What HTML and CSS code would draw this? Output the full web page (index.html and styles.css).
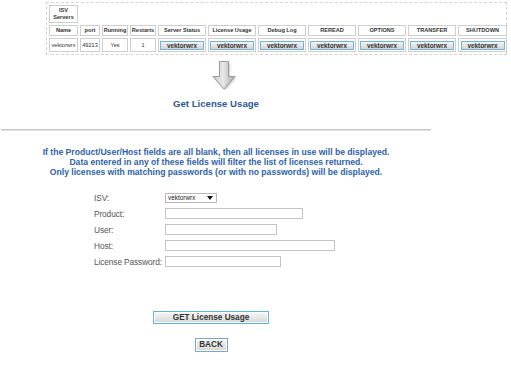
FILE: index.html
```html
<!DOCTYPE html>
<html>
<head>
<meta charset="utf-8">
<title>Get License Usage</title>
<link rel="stylesheet" href="styles.css">
</head>
<body>
<div class="servers">
  <table class="isv">
    <colgroup>
      <col class="c-name"><col class="c-port"><col class="c-run"><col class="c-rest">
      <col class="c-btn"><col class="c-btn"><col class="c-btn"><col class="c-btn"><col class="c-btn"><col class="c-btn"><col class="c-last">
    </colgroup>
    <tr class="r-top"><th class="cell">ISV<br>Servers</th><td colspan="10" class="blank"></td></tr>
    <tr class="r-head">
      <th class="cell">Name</th><th class="cell">port</th><th class="cell">Running</th><th class="cell">Restarts</th>
      <th class="cell">Server Status</th><th class="cell">License Usage</th><th class="cell">Debug Log</th>
      <th class="cell">REREAD</th><th class="cell">OPTIONS</th><th class="cell">TRANSFER</th><th class="cell">SHUTDOWN</th>
    </tr>
    <tr class="r-data">
      <td class="cell">vektorwrx</td><td class="cell">49213</td><td class="cell">Yes</td><td class="cell">1</td>
      <td class="cell"><button class="sbtn">vektorwrx</button></td>
      <td class="cell"><button class="sbtn">vektorwrx</button></td>
      <td class="cell"><button class="sbtn">vektorwrx</button></td>
      <td class="cell"><button class="sbtn">vektorwrx</button></td>
      <td class="cell"><button class="sbtn">vektorwrx</button></td>
      <td class="cell"><button class="sbtn">vektorwrx</button></td>
      <td class="cell"><button class="sbtn">vektorwrx</button></td>
    </tr>
  </table>
</div>

<div class="main">
  <div class="arrow">
    <svg width="26" height="30" viewBox="0 0 26 30">
      <defs>
        <linearGradient id="ag" x1="0" y1="0" x2="1" y2="0">
          <stop offset="0" stop-color="#c9c9c9"/>
          <stop offset="0.45" stop-color="#e9e9e9"/>
          <stop offset="1" stop-color="#a9a9a9"/>
        </linearGradient>
        <filter id="sh" x="-30%" y="-30%" width="160%" height="160%">
          <feGaussianBlur stdDeviation="0.8"/>
        </filter>
      </defs>
      <path d="M8 1.5 H17 V16 H23.5 L12.5 28.5 L1.5 16 H8 Z" fill="#bdbdbd" filter="url(#sh)" transform="translate(0.6,0.6)"/>
      <path d="M7.5 0.5 H16.5 V15.5 H23 L12 28 L1 15.5 H7.5 Z" fill="url(#ag)" stroke="#9b9b9b" stroke-width="1"/>
    </svg>
  </div>
  <h2 class="title">Get License Usage</h2>
  <div class="rule"></div>
  <p class="info">If the Product/User/Host fields are all blank, then all licenses in use will be displayed.<br>Data entered in any of these fields will filter the list of licenses returned.<br>Only licenses with matching passwords (or with no passwords) will be displayed.</p>

  <form class="form">
    <label class="lbl" for="isv">ISV:</label>
    <span class="sel"><select id="isv" class="sel-in"><option>vektorwrx</option></select><svg class="sel-arrow" width="6" height="4" viewBox="0 0 6 4"><path d="M0 0 H6 L3 4 Z" fill="#111"/></svg></span>
    <label class="lbl" for="product">Product:</label>
    <input id="product" class="fld w-product" type="text">
    <label class="lbl" for="user">User:</label>
    <input id="user" class="fld w-user" type="text">
    <label class="lbl" for="host">Host:</label>
    <input id="host" class="fld w-host" type="text">
    <label class="lbl" for="pw">License Password:</label>
    <input id="pw" class="fld w-pw" type="password">
  </form>

  <div class="actions">
    <button class="btn btn-get" type="button">GET License Usage</button>
    <button class="btn btn-back" type="button">BACK</button>
  </div>
</div>
</body>
</html>
```

FILE: styles.css
```css
* { box-sizing: border-box; }
html, body { background: #fff; }
body {
  margin: 0;
  font-family: "Liberation Sans", Arial, sans-serif;
  color: #333;
}

/* server table */
.servers {
  margin: 2px 0 0 46px;
  border: 1px dashed #d4d4d4;
  width: 461px;
}
.isv {
  table-layout: fixed;
  border-collapse: separate;
  border-spacing: 2px;
  width: 459px;
}
.c-name { width: 29px; }
.c-port { width: 20px; }
.c-run { width: 26px; }
.c-rest { width: 26px; }
.c-btn { width: 48px; }
.c-last { width: 49px; }
.cell {
  border: 1px solid #cfcfcf;
  padding: 1px 0;
  text-align: center;
  font-size: 5.6px;
  line-height: 7px;
  color: #333;
  white-space: nowrap;
  overflow: hidden;
}
th.cell { font-weight: bold; }
td.cell { font-weight: normal; }
.blank { border: none; padding: 0; }
.r-top .cell { height: 18px; }
.r-head .cell { height: 11px; }
.r-data .cell { height: 14px; padding: 0; }
.sbtn {
  display: inline-block;
  width: 44px;
  height: 9px;
  margin: 0;
  padding: 0;
  border: 1px solid #6fb7d8;
  background: linear-gradient(#f4f4f4, #d4d4d4);
  font-family: "Liberation Sans", Arial, sans-serif;
  font-weight: bold;
  font-size: 6.4px;
  line-height: 7px;
  color: #333;
  vertical-align: middle;
}

/* main */
.main {
  width: 430px;
  margin-left: 1px;
}
.arrow {
  display: flex;
  justify-content: center;
  padding-left: 18px;
  margin-top: 6px;
}
.arrow svg { display: block; }
.title {
  margin: 7px 0 0;
  text-align: center;
  font-size: 9.6px;
  line-height: 12px;
  font-weight: bold;
  color: #2d5a98;
}
.rule {
  margin-top: 19px;
  border-top: 1px solid #c6c6c6;
  border-bottom: 1px solid #e2e2e2;
}
.info {
  margin: 16px 0 0;
  text-align: center;
  font-size: 8.6px;
  line-height: 10px;
  font-weight: bold;
  color: #2e63a9;
}

/* form */
.form {
  margin: 16px 0 0 93px;
  display: grid;
  grid-template-columns: 71px auto;
  row-gap: 5px;
  align-items: center;
  justify-items: start;
}
.lbl {
  font-size: 8.3px;
  line-height: 10px;
  color: #555;
  white-space: nowrap;
  letter-spacing: -0.1px;
}
.sel {
  display: inline-flex;
  align-items: center;
  width: 52px;
  height: 10px;
  border: 1px solid #b8b8b8;
  background: #fff;
}
.sel-in {
  appearance: none;
  -webkit-appearance: none;
  border: none;
  background: transparent;
  padding: 0 0 0 2px;
  margin: 0;
  width: 40px;
  height: 8px;
  font-family: "Liberation Sans", Arial, sans-serif;
  font-size: 6.4px;
  line-height: 8px;
  color: #222;
  outline: none;
}
.sel-arrow { margin-left: 1px; }
.fld {
  height: 11px;
  border: 1px solid #c4c4c4;
  background: #fff;
  padding: 0 2px;
  margin: 0;
  font-size: 7px;
}
.w-product { width: 138px; }
.w-user { width: 112px; }
.w-host { width: 170px; }
.w-pw { width: 116px; }

/* actions */
.actions {
  display: flex;
  flex-direction: column;
  align-items: center;
  padding-right: 10px;
  margin-top: 44px;
}
.btn {
  margin: 0;
  padding: 0;
  font-family: "Liberation Sans", Arial, sans-serif;
  font-weight: bold;
  color: #333;
  background: linear-gradient(#f7f7f7, #d6d6d6);
  box-shadow: inset 0 0 0 1px #fff;
}
.btn-get {
  width: 116px;
  height: 13px;
  border: 1px solid #5cb7dd;
  font-size: 8.2px;
  line-height: 11px;
}
.btn-back {
  margin-top: 14px;
  width: 33px;
  height: 14px;
  border: 1px solid #7aa9c4;
  font-size: 8.2px;
  line-height: 12px;
}
```
